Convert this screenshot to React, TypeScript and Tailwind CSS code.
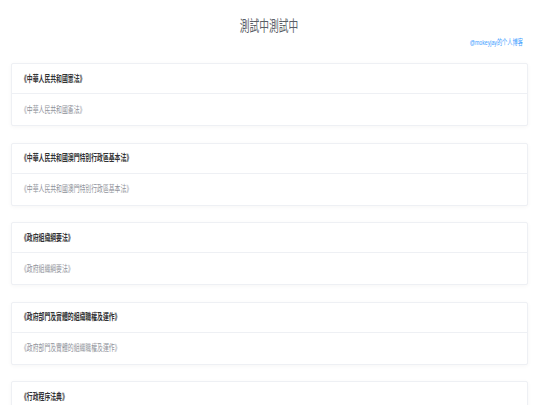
import React from "react";

const laws = [
  "《中華人民共和國憲法》",
  "《中華人民共和國澳門特別行政區基本法》",
  "《政府組織綱要法》",
  "《政府部門及實體的組織職權及運作》",
  "《行政程序法典》",
];

const tc = { fontFamily: '"Noto Sans CJK TC", "Noto Sans CJK SC", sans-serif' };

export default function App() {
  return (
    <div className="min-h-screen bg-white px-[11px] pr-[12px]" style={tc}>
      {/* Title */}
      <div className="flex h-[36px] items-start justify-center pt-[17px]">
        <h1 className="inline-block origin-center scale-x-[0.65] text-[15px] leading-[16px] font-normal text-[#5a5e66]">
          測試中測試中
        </h1>
      </div>

      {/* Blog link */}
      <div className="flex h-[14px] items-center justify-end pr-[5px]">
        <a
          className="inline-block origin-right scale-x-[0.65] text-[8px] leading-[10px] text-[#409eff]"
          style={{ fontFamily: '"Liberation Sans", "Noto Sans CJK SC", sans-serif' }}
        >
          @mokeyjay的个人博客
        </a>
      </div>

      {/* Law cards */}
      <div className="mt-[13px] flex flex-col gap-[16.5px]">
        {laws.map((law) => (
          <div
            key={law}
            className="rounded-[2px] border border-[#eef0f4] bg-white shadow-[0_1px_4px_rgba(0,0,0,0.04)]"
          >
            <div className="flex h-[30px] items-center border-b border-[#eef0f4] px-[9px]">
              <span className="inline-block origin-left scale-x-[0.65] whitespace-nowrap text-[9px] font-bold text-[#303133]">
                {law}
              </span>
            </div>
            <div className="flex h-[31px] items-center px-[9px]">
              <span className="inline-block origin-left scale-x-[0.65] whitespace-nowrap text-[9px] text-[#8e9199]">
                {law}
              </span>
            </div>
          </div>
        ))}
      </div>
    </div>
  );
}
